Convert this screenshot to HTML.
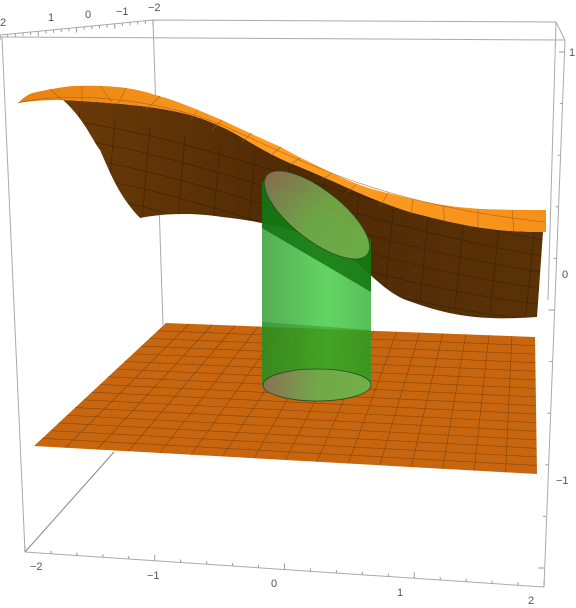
<!DOCTYPE html>
<html><head><meta charset="utf-8"><style>
html,body{margin:0;padding:0;background:#fff;}
svg{display:block;font-family:"Liberation Sans",sans-serif;}
text{font-size:11px;fill:#555;}
</style></head><body>
<svg id="s" width="576" height="608" viewBox="0 0 576 608" xmlns="http://www.w3.org/2000/svg">
<defs>
<linearGradient id="dark" x1="0" y1="0" x2="1" y2="0">
<stop offset="0" stop-color="#6b3a08"/><stop offset="0.5" stop-color="#4e2a05"/><stop offset="1" stop-color="#5a3206"/>
</linearGradient>
<linearGradient id="strip" x1="0" y1="0" x2="1" y2="0">
<stop offset="0" stop-color="#e8820f"/><stop offset="0.5" stop-color="#ff9e22"/><stop offset="1" stop-color="#f59018"/>
</linearGradient>
<linearGradient id="cyl" x1="0" y1="0" x2="1" y2="0">
<stop offset="0" stop-color="#2f9a2f"/><stop offset="0.6" stop-color="#40cc40"/><stop offset="1" stop-color="#35b035"/>
</linearGradient>
<linearGradient id="cap" x1="0" y1="0" x2="1" y2="0">
<stop offset="0" stop-color="#8a7055"/><stop offset="0.5" stop-color="#72a848"/><stop offset="1" stop-color="#70b048"/>
</linearGradient>
<clipPath id="dclip"><path id="dpath" d="M63,100 C85,120 92,140 100,150 C110,172 118,195 140,218 C160,214 190,212 222,217 C270,222 300,232 332,245 C360,260 380,290 406,300 C440,312 470,322 537,317 L543,232 C500,232 470,228 410,212 C370,200 340,183 290,163 C260,150 240,135 222,127 C190,112 160,105 63,100 Z"/></clipPath>
</defs>
<g stroke="#aaa" stroke-width="1" fill="none">
<polyline points="0,35 153,20 556,22 565,40"/>
<line x1="0" y1="37" x2="565" y2="40"/>
<line x1="153" y1="20" x2="163" y2="325"/>
<line x1="2" y1="37" x2="25" y2="552"/>
<line x1="25" y1="552" x2="544" y2="587"/>
<line x1="25" y1="552" x2="114" y2="452" stroke="#888"/>
<line x1="565" y1="40" x2="544" y2="587"/>
<line x1="556" y1="22" x2="548" y2="300"/>
</g>
<g id="ticks" stroke="#999" stroke-width="1"></g>
<path d="M63,100 C85,120 92,140 100,150 C110,172 118,195 140,218 C160,214 190,212 222,217 C270,222 300,232 332,245 C360,260 380,290 406,300 C440,312 470,322 537,317 L543,232 C500,232 470,228 410,212 C370,200 340,183 290,163 C260,150 240,135 222,127 C190,112 160,105 63,100 Z" fill="url(#dark)"/>
<g id="darkgrid" stroke="#2a1605" stroke-width="0.6" fill="none" opacity="0.6" clip-path="url(#dclip)"></g>
<path d="M18,103 C25,96 30,93 37,92 C55,88 70,86 74,86 C100,85 120,87 126,88 C145,91 155,95 166,98 C190,106 205,113 222,120 C245,131 265,140 281,147 C300,158 318,166 332,173 C355,184 370,189 388,193 C410,199 430,203 443,205 C470,209 490,210 546,210 L546,232 C500,232 470,228 410,212 C370,200 340,183 290,163 C260,150 240,135 222,127 C190,112 160,105 63,100 C45,100 30,101 18,103 Z" fill="url(#strip)"/>
<g stroke="#9a5a10" stroke-width="0.6" opacity="0.8">
<line x1="50" y1="89" x2="62" y2="100"/><line x1="82" y1="86" x2="82" y2="100"/><line x1="100" y1="86" x2="112" y2="102"/>
<line x1="126" y1="88" x2="118" y2="104"/><line x1="160" y1="96" x2="146" y2="110"/><line x1="198" y1="110" x2="190" y2="120"/>
<line x1="222" y1="120" x2="212" y2="130"/><line x1="252" y1="133" x2="242" y2="142"/><line x1="281" y1="147" x2="270" y2="156"/>
<line x1="300" y1="158" x2="290" y2="165"/><line x1="332" y1="173" x2="322" y2="180"/><line x1="356" y1="185" x2="346" y2="193"/>
<line x1="388" y1="193" x2="380" y2="206"/><line x1="413" y1="200" x2="411" y2="214"/><line x1="443" y1="205" x2="445" y2="222"/>
<line x1="478" y1="209" x2="478" y2="228"/><line x1="512" y1="210" x2="514" y2="231"/>
<path d="M18,103 C60,92 150,96 222,125 C300,160 380,205 546,222" fill="none"/>
</g>
<polygon points="166,323 535,337 537,474 34,446" fill="#c8660f"/>
<g id="pgrid" stroke="#6e3a0a" stroke-width="0.6" opacity="0.75"></g>
<path d="M262,182 L262,385 A54,15 0 0 0 371,385 L371,240 C360,230 300,190 262,182 Z" fill="url(#cyl)" opacity="0.82"/>
<path d="M262,182 L262,228 L371,292 L371,240 C360,230 300,190 262,182 Z" fill="#0b6a08" opacity="0.75"/>
<path d="M262,322 L371,330 L371,385 L262,385 Z" fill="#1d7a05" opacity="0.35"/>
<ellipse cx="317" cy="215" rx="64" ry="25" transform="rotate(38 317 215)" fill="url(#cap)" opacity="0.95" stroke="#2a4a20" stroke-width="0.8"/>
<ellipse cx="317" cy="385" rx="54" ry="16" fill="url(#cap)" stroke="#2a4a20" stroke-width="0.8"/>
<g>
<text x="0" y="26">2</text><text x="48" y="21">1</text><text x="85" y="18">0</text><text x="116" y="15">−1</text><text x="148" y="11">−2</text>
<text x="569" y="56">1</text><text x="562" y="278">0</text><text x="556" y="484">−1</text>
<text x="30" y="570">−2</text><text x="147" y="579">−1</text><text x="271" y="587">0</text><text x="397" y="596">1</text><text x="528" y="604">2</text>
</g>
</svg>
<script>
(function(){
var ns="http://www.w3.org/2000/svg";
function L(g,x1,y1,x2,y2){var l=document.createElementNS(ns,"line");l.setAttribute("x1",x1);l.setAttribute("y1",y1);l.setAttribute("x2",x2);l.setAttribute("y2",y2);g.appendChild(l);}
var P=[[166,323],[535,337],[537,474],[34,446]];
function bl(u,v){var a=P[0],b=P[1],c=P[2],d=P[3];
return [(1-u)*(1-v)*a[0]+u*(1-v)*b[0]+u*v*c[0]+(1-u)*v*d[0],(1-u)*(1-v)*a[1]+u*(1-v)*b[1]+u*v*c[1]+(1-u)*v*d[1]];}
var g=document.getElementById("pgrid"),n=16;
for(var i=1;i<n;i++){var t=i/n;var p=bl(t,0),q=bl(t,1);L(g,p[0],p[1],q[0],q[1]);p=bl(0,t);q=bl(1,t);L(g,p[0],p[1],q[0],q[1]);}
var tk=document.getElementById("ticks");
for(var i=0;i<=20;i++){var t=i/20;var x=0+t*153,y=35-t*15;L(tk,x,y,x,y+(i%5==0?5:3));
x=25+t*519;y=552+t*35;L(tk,x,y,x,y-(i%5==0?6:3));}
for(var i=0;i<=10;i++){var t=i/10;var x=565-t*21,y=52+t*516;L(tk,x,y,x-(i%5==0?6:3),y);}
var dg=document.getElementById("darkgrid");
for(var i=0;i<14;i++){var x=80+i*35;L(dg,x,110+i*9,x-10,230+i*7);}
for(var j=0;j<6;j++){var p=document.createElementNS(ns,"path");var o=j*18;
p.setAttribute("d","M60,"+(120+o)+" C200,"+(135+o)+" 330,"+(200+o*1.1)+" 543,"+(240+o*0.9));dg.appendChild(p);}
})();
</script>
</body></html>
